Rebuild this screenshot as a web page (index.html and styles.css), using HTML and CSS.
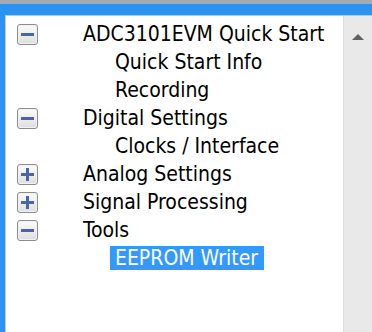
FILE: index.html
```html
<!DOCTYPE html>
<html lang="en">
<head>
    <meta charset="UTF-8">
    <title>Tree</title>
    <link rel="stylesheet" href="styles.css">
</head>
<body>
    <!-- window frame -->
    <div class="frame">
        <div class="panel">
            <!-- tree of pages -->
            <ul class="tree">
                <li class="node"><span class="toggle minus"></span><span class="label">ADC3101EVM Quick Start</span></li>
                <li class="node child"><span class="label">Quick Start Info</span></li>
                <li class="node child"><span class="label">Recording</span></li>
                <li class="node"><span class="toggle minus"></span><span class="label">Digital Settings</span></li>
                <li class="node child"><span class="label">Clocks / Interface</span></li>
                <li class="node"><span class="toggle plus"></span><span class="label">Analog Settings</span></li>
                <li class="node"><span class="toggle plus"></span><span class="label">Signal Processing</span></li>
                <li class="node"><span class="toggle minus"></span><span class="label">Tools</span></li>
                <li class="node child"><span class="label selected">EEPROM Writer</span></li>
            </ul>
            <!-- vertical scrollbar -->
            <div class="scrollbar">
                <div class="arrow-up"></div>
            </div>
        </div>
    </div>
</body>
</html>
```

FILE: styles.css
```css
body {
    margin: 0;
    padding: 0;
    background: #a9a9a9;
    font-family: "DejaVu Sans Condensed", "DejaVu Sans", sans-serif;
    overflow: hidden;
}

/* Blue window border */
.frame {
    margin-top: 4px;
    height: 328px;
    background: #2a92f2;
    padding: 11px 0 0 5px;
    box-sizing: border-box;
}

.panel {
    display: flex;
    height: 100%;
    background: #fff;
    border-top: 1px solid #c8c8c8;
    border-left: 1px solid #c8c8c8;
}

/* Tree */
.tree {
    list-style: none;
    margin: 0;
    padding: 4px 0 0 0;
    flex: 1;
}

.node {
    display: flex;
    align-items: center;
    height: 28px;
    font-size: 21px;
    color: #000;
}

.toggle {
    position: relative;
    width: 19px;
    height: 19px;
    margin: 0 40px 0 11px;
    border: 1px solid #8d8d8d;
    border-radius: 3px;
    background: linear-gradient(#fbfbfb, #dedede);
    box-shadow: inset 0 0 0 1px #f2f2f2;
}

.toggle::before,
.toggle::after {
    content: "";
    position: absolute;
    background: #4b64a6;
}

.toggle::before {
    left: 3px;
    top: 8px;
    width: 13px;
    height: 3px;
}

.plus::after {
    left: 8px;
    top: 3px;
    width: 3px;
    height: 13px;
}

.child {
    padding-left: 104px;
}

.label {
    padding: 0 6px 0 5px;
    line-height: 24px;
}

.selected {
    background: #3399ff;
    color: #fff;
}

/* Scrollbar */
.scrollbar {
    width: 28px;
    background: #e9e9e9;
    border-left: 1px solid #dcdcdc;
}

.arrow-up {
    margin: 18px auto 0;
    width: 0;
    height: 0;
    border-left: 6px solid transparent;
    border-right: 6px solid transparent;
    border-bottom: 6px solid #606060;
}
```
